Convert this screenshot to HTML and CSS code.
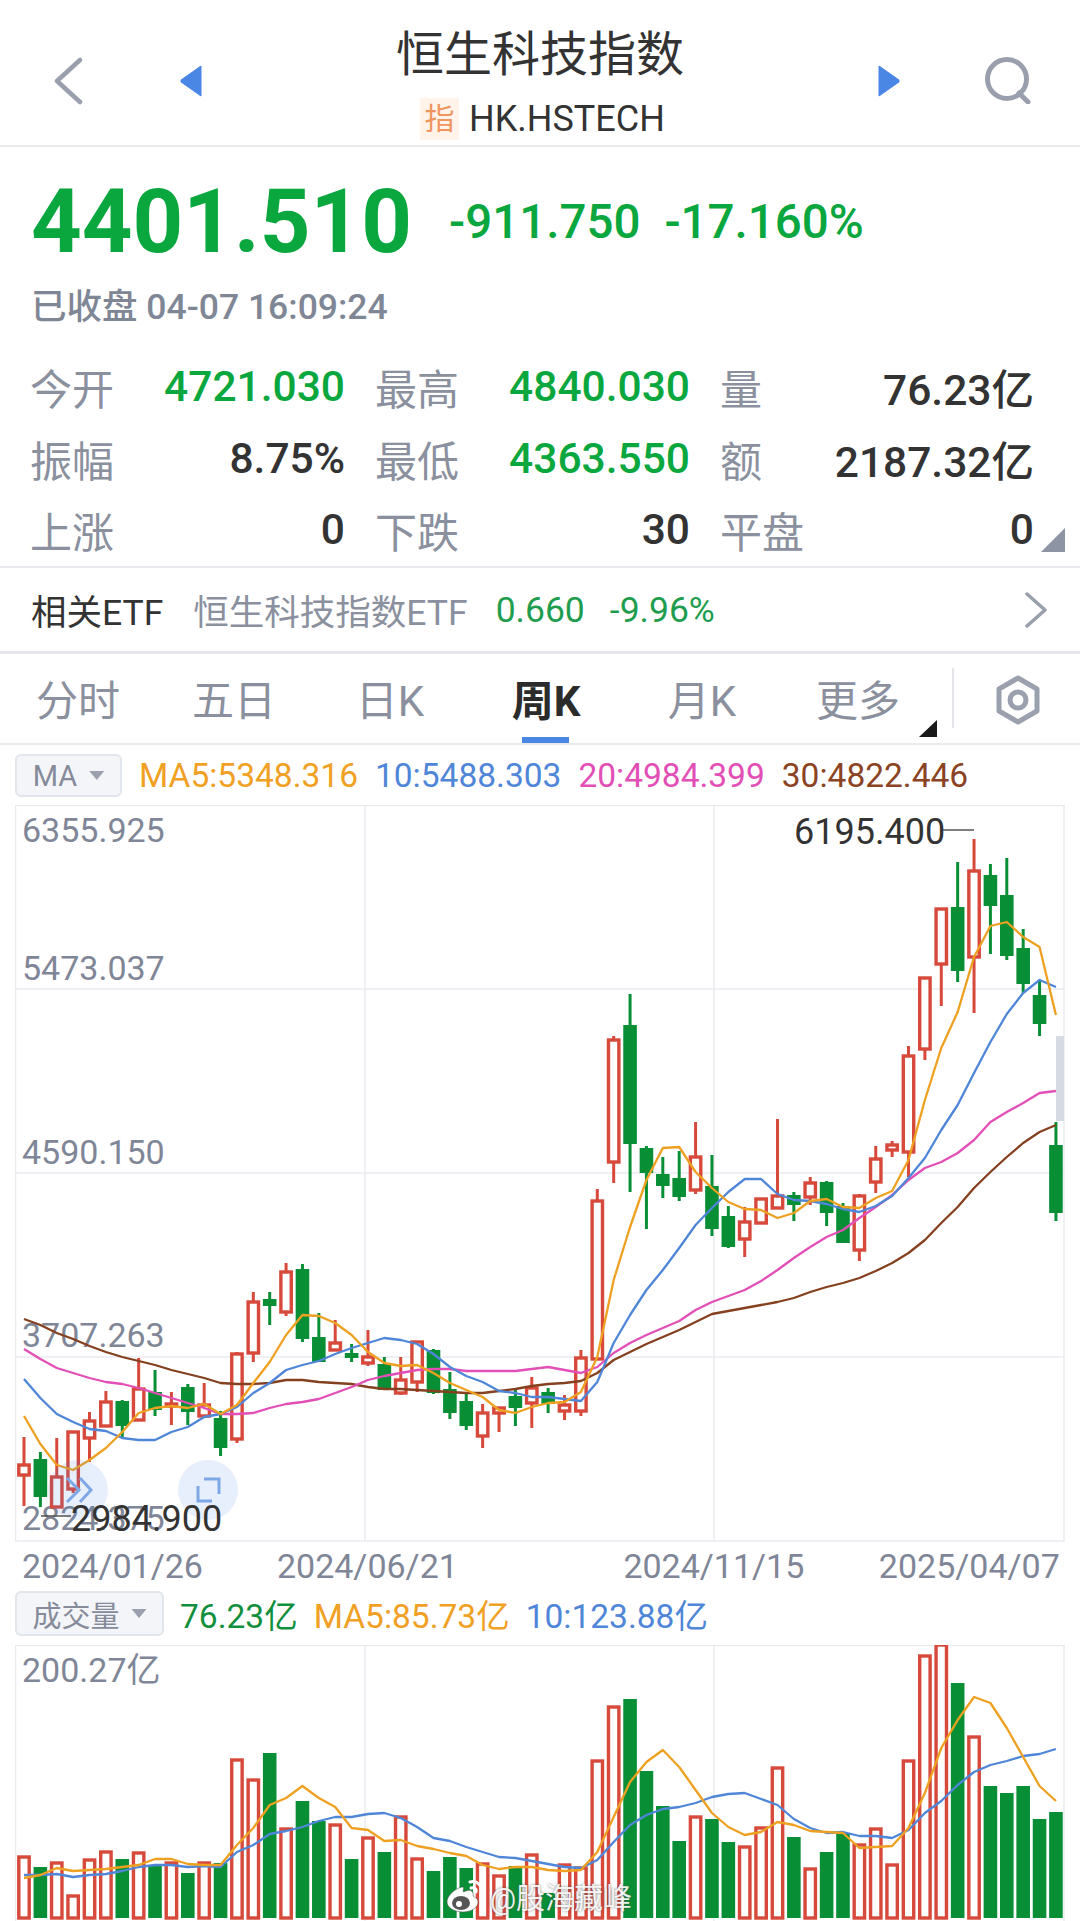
FILE: index.html
```html
<!DOCTYPE html>
<html>
<head>
    <meta charset="utf-8">
    <title>恒生科技指数</title>
    <link rel="stylesheet" href="styles.css">
</head>
<body>
    <div class="page">
        <div class="header">
            <div class="nav nav-left">
                <svg class="icon-back" width="29" height="48" viewBox="0 0 29 48"><path d="M26 3 L3 24 L26 45" /></svg>
                <svg class="icon-arrow" width="22" height="32" viewBox="0 0 22 32"><path d="M21 1 V31 L1 17 V15 Z" /></svg>
            </div>
            <div class="title-block">
                <h1>恒生科技指数</h1>
                <div class="code"><span class="code-tag">指</span>HK.HSTECH</div>
            </div>
            <div class="nav nav-right">
                <svg class="icon-arrow" width="22" height="32" viewBox="0 0 22 32"><path d="M1 1 V31 L21 17 V15 Z" /></svg>
                <svg class="icon-search" width="47" height="47" viewBox="0 0 47 47"><circle cx="23" cy="22" r="19.5" /><path d="M35 36 L44 45" /></svg>
            </div>
        </div>

        <div class="quote">
            <div class="price-row">
                <span class="price">4401.510</span>
                <span class="change">-911.750</span>
                <span class="change">-17.160%</span>
            </div>
            <div class="status">已收盘 04-07 16:09:24</div>
        </div>

        <div class="stats">
            <div class="stat"><span class="stat-name">今开</span><span class="stat-num down">4721.030</span></div>
            <div class="stat"><span class="stat-name">最高</span><span class="stat-num down">4840.030</span></div>
            <div class="stat"><span class="stat-name">量</span><span class="stat-num">76.23亿</span></div>
            <div class="stat"><span class="stat-name">振幅</span><span class="stat-num">8.75%</span></div>
            <div class="stat"><span class="stat-name">最低</span><span class="stat-num down">4363.550</span></div>
            <div class="stat"><span class="stat-name">额</span><span class="stat-num">2187.32亿</span></div>
            <div class="stat"><span class="stat-name">上涨</span><span class="stat-num">0</span></div>
            <div class="stat"><span class="stat-name">下跌</span><span class="stat-num">30</span></div>
            <div class="stat"><span class="stat-name">平盘</span><span class="stat-num">0</span></div>
            <div class="stats-corner"></div>
        </div>

        <div class="etf">
            <span class="etf-title">相关ETF</span>
            <span class="etf-name">恒生科技指数ETF</span>
            <span class="etf-price">0.660</span>
            <span class="etf-price">-9.96%</span>
            <svg class="icon-more" width="24" height="36" viewBox="0 0 24 36"><path d="M3 2 L21 18 L3 34" /></svg>
        </div>

        <div class="tabs">
            <div class="tab">分时</div>
            <div class="tab">五日</div>
            <div class="tab">日K</div>
            <div class="tab tab-on">周K</div>
            <div class="tab">月K</div>
            <div class="tab tab-more">更多</div>
            <div class="tab-split"></div>
            <svg class="icon-setting" width="46" height="50" viewBox="0 0 46 50"><path d="M23 3 L42 14 V36 L23 47 L4 36 V14 Z" /><circle cx="23" cy="25" r="8" /></svg>
        </div>

        <div class="legend legend-ma">
            <div class="picker picker-ma">MA<i></i></div>
            <span class="c-ma5">MA5:5348.316</span>
            <span class="c-ma10">10:5488.303</span>
            <span class="c-ma20">20:4984.399</span>
            <span class="c-ma30">30:4822.446</span>
        </div>

        <svg id="kline" class="chart" width="1050" height="737" viewBox="15 805 1050 737"></svg>

        <div class="dates">
            <span>2024/01/26</span>
            <span class="date-b">2024/06/21</span>
            <span class="date-c">2024/11/15</span>
            <span class="date-d">2025/04/07</span>
        </div>

        <div class="legend legend-vol">
            <div class="picker picker-vol">成交量<i></i></div>
            <span class="c-vol">76.23亿</span>
            <span class="c-ma5">MA5:85.73亿</span>
            <span class="c-ma10">10:123.88亿</span>
        </div>

        <svg id="volume" class="chart" width="1050" height="276" viewBox="15 1645 1050 276"></svg>

        <div class="watermark">
            <svg width="40" height="34" viewBox="0 0 40 34">
                <path class="wb-body" d="M16 8 C8 10 1 17 1 23 C1 29 9 33 17 33 C26 33 32 28 32 23 C32 19 28 18 27 17 C28 13 25 10 20 12 C18 13 17 13 17 12 C18 9 18 8 16 8 Z" />
                <ellipse class="wb-eye" cx="15" cy="24" rx="9" ry="7" />
                <circle class="wb-dot" cx="13" cy="25" r="3" />
                <path class="wb-wave" d="M24 3 C31 1 37 7 36 14" />
                <path class="wb-wave" d="M25 9 C28 8 31 10 30 13" />
            </svg>
            <span>@股海藏峰</span>
        </div>
    </div>

    <script src="chart.js"></script>
</body>
</html>
```

FILE: styles.css
```css
* {
    box-sizing: border-box;
}
body {
    margin: 0;
    background: #fff;
    font-family: Roboto, "Noto Sans CJK SC", sans-serif;
    color: #333;
}
.page {
    position: relative;
    width: 1080px;
    height: 1921px;
    overflow: hidden;
}

/* top bar */
.header {
    display: grid;
    grid-template-columns: 1fr auto 1fr;
    height: 147px;
    border-bottom: 2px solid #e9eaed;
}
.nav {
    display: flex;
    align-items: flex-start;
    padding-top: 57px;
}
.nav-left {
    padding-left: 54px;
    gap: 97px;
}
.nav-right {
    justify-content: flex-end;
    padding-right: 49px;
    gap: 84px;
}
.icon-back path {
    fill: none;
    stroke: #9a9fad;
    stroke-width: 4.5;
    stroke-linecap: round;
    stroke-linejoin: round;
}
.icon-arrow {
    margin-top: 8px;
}
.icon-arrow path {
    fill: #4a86e4;
    stroke: #4a86e4;
    stroke-width: 1;
    stroke-linejoin: round;
}
.icon-search circle, .icon-search path {
    fill: none;
    stroke: #9a9fad;
    stroke-width: 5;
    stroke-linecap: round;
}
.title-block {
    text-align: center;
}
.title-block h1 {
    margin: 0;
    padding-top: 25px;
    font-size: 48px;
    line-height: 60px;
    font-weight: 400;
}
.code {
    display: flex;
    align-items: center;
    justify-content: center;
    height: 42px;
    margin-top: 13px;
    padding-left: 5px;
    font-size: 36px;
    color: #333;
}
.code-tag {
    width: 39px;
    height: 42px;
    margin-right: 10px;
    background: #fff3ea;
    color: #f0955f;
    font-size: 30px;
    line-height: 42px;
}

/* price */
.quote {
    height: 204px;
    padding-left: 31px;
}
.price-row {
    display: flex;
    align-items: center;
    height: 150px;
    color: #0aa73f;
}
.price {
    font-size: 88.5px;
    font-weight: 700;
    margin-right: 37px;
}
.change {
    font-size: 47.5px;
    font-weight: 500;
    margin-right: 24px;
}
.status {
    margin-top: -12px;
    font-size: 35.5px;
    line-height: 44px;
    font-weight: 500;
    color: #7f8695;
}

/* stats table */
.stats {
    position: relative;
    display: grid;
    grid-template-columns: 315px 315px 314px;
    grid-auto-rows: 71.5px;
    column-gap: 30px;
    height: 215px;
    padding-left: 30px;
}
.stat {
    display: flex;
    align-items: center;
    justify-content: space-between;
}
.stat-name {
    font-size: 42px;
    color: #8a909e;
}
.stat-num {
    font-size: 42.5px;
    font-weight: 500;
    color: #333;
}
.down {
    color: #0aa73f;
}
.stats-corner {
    position: absolute;
    right: 15px;
    bottom: 14px;
    width: 24px;
    height: 24px;
    background: #8d94a3;
    clip-path: polygon(100% 0, 100% 100%, 0 100%);
}

/* related etf */
.etf {
    display: flex;
    align-items: center;
    height: 88px;
    padding-left: 31px;
    border-top: 2px solid #e9eaed;
    border-bottom: 3px solid #e6e7ea;
    font-size: 35.5px;
}
.etf-title {
    color: #333;
    margin-right: 30px;
}
.etf-name {
    color: #8a909e;
    margin-right: 28px;
}
.etf-price {
    color: #1f9d4f;
    margin-right: 25px;
}
.icon-more {
    margin-left: auto;
    margin-right: 32px;
}
.icon-more path {
    fill: none;
    stroke: #9a9fad;
    stroke-width: 3.5;
    stroke-linecap: round;
    stroke-linejoin: round;
}

/* period tabs */
.tabs {
    display: grid;
    grid-template-columns: repeat(6, 156px) 1fr;
    align-items: center;
    position: relative;
    height: 91px;
    border-bottom: 2px solid #e9eaed;
}
.tab {
    position: relative;
    height: 89px;
    line-height: 95px;
    text-align: center;
    font-size: 42px;
    color: #8a909e;
}
.tab-on {
    color: #2b2b2b;
    font-weight: 700;
}
.tab-on::after {
    content: "";
    position: absolute;
    left: 54px;
    bottom: 0;
    width: 47px;
    height: 6px;
    background: #4a86e4;
}
.tab-more::after {
    content: "";
    position: absolute;
    right: -1px;
    bottom: 6px;
    width: 18px;
    height: 17px;
    background: #1a1a1a;
    clip-path: polygon(100% 0, 100% 100%, 0 100%);
}
.tab-split {
    position: absolute;
    left: 952px;
    top: 14px;
    width: 2px;
    height: 60px;
    background: #e4e5e9;
}
.icon-setting {
    position: absolute;
    left: 995px;
    top: 21px;
}
.icon-setting path, .icon-setting circle {
    fill: none;
    stroke: #9aa0ae;
    stroke-width: 5;
    stroke-linejoin: round;
}

/* legends */
.legend {
    display: flex;
    align-items: center;
    padding-left: 15px;
    font-size: 33.5px;
}
.legend-ma {
    height: 60px;
    padding-top: 1px;
    gap: 17px;
}
.legend-vol {
    height: 55px;
    padding-bottom: 8px;
    gap: 16px;
}
.picker {
    display: flex;
    align-items: center;
    justify-content: center;
    background: #f4f5f9;
    border: 2px solid #e3e5ed;
    border-radius: 6px;
    color: #858b9b;
    font-size: 29px;
}
.picker i {
    width: 15px;
    height: 9px;
    margin-left: 12px;
    background: #9aa0ae;
    clip-path: polygon(0 0, 100% 0, 50% 100%);
}
.picker-ma {
    width: 107px;
    height: 43px;
}
.picker-vol {
    width: 149px;
    height: 45px;
}
.c-ma5 { color: #f0a023; }
.c-ma10 { color: #4f86d8; }
.c-ma20 { color: #e24fb6; }
.c-ma30 { color: #8b4323; }
.c-vol { color: #128f3d; }

/* charts */
.chart {
    display: block;
    margin-left: 15px;
}
.chart text {
    font-family: Roboto, "Noto Sans CJK SC", sans-serif;
    font-size: 34px;
    fill: #7f8697;
}
.chart .peak {
    font-size: 36px;
    fill: #333;
}
.dates {
    display: flex;
    align-items: center;
    height: 48px;
    padding-left: 22px;
    font-size: 34px;
    color: #7f8697;
}
.date-b { margin-left: 74px; }
.date-c { margin-left: 165.5px; }
.date-d { margin-left: 74.5px; }

/* weibo mark on top of the bars */
.watermark {
    position: absolute;
    left: 446px;
    top: 1875px;
    display: flex;
    align-items: center;
    gap: 4px;
    font-size: 29px;
    color: rgba(255, 255, 255, 0.92);
    text-shadow: 0 0 3px rgba(70, 70, 70, 0.7);
}
.wb-body {
    fill: #fff;
    stroke: rgba(70, 70, 70, 0.5);
}
.wb-eye {
    fill: #555;
}
.wb-dot {
    fill: #fff;
}
.wb-wave {
    fill: none;
    stroke: #fff;
    stroke-width: 3;
    stroke-linecap: round;
}
```

FILE: chart.js
```js
var RED = '#d6493b';
var GREEN = '#088f36';
var COLORS = { ma5: '#eea021', ma10: '#4f86d8', ma20: '#e24fb6', ma30: '#84401f' };
var NS = 'http://www.w3.org/2000/svg';

function xAt(i) {
    return 24 + i * 16.38;
}

// [wick top, wick bottom, body top, body bottom, rising]
var candles = [
    [1437,1506,1465,1475,1],[1452,1507,1459,1497,0],[1438,1507,1477,1507,1],[1431,1493,1432,1489,1],
    [1412,1462,1421,1438,1],[1391,1427,1402,1426,1],[1400,1437,1401,1426,0],[1358,1420,1389,1420,1],
    [1370,1416,1392,1410,0],[1392,1425,1404,1406,1],[1384,1425,1387,1412,0],[1383,1417,1405,1416,1],
    [1411,1456,1418,1448,0],[1352,1443,1354,1439,1],[1292,1362,1302,1353,1],[1292,1325,1299,1306,0],
    [1263,1316,1272,1312,1],[1264,1342,1269,1339,0],[1313,1362,1337,1362,0],[1320,1350,1343,1350,1],
    [1344,1362,1353,1358,0],[1330,1366,1357,1363,1],[1357,1390,1364,1390,0],[1357,1395,1380,1393,1],
    [1342,1392,1342,1382,1],[1349,1394,1350,1393,0],[1372,1419,1389,1413,0],[1394,1430,1401,1426,0],
    [1404,1448,1413,1436,1],[1407,1432,1408,1413,1],[1388,1426,1396,1408,0],[1377,1428,1388,1403,1],
    [1388,1413,1392,1404,0],[1395,1420,1405,1411,1],[1350,1416,1358,1411,1],[1189,1360,1201,1359,1],
    [1036,1183,1040,1162,1],[994,1192,1025,1144,0],[1146,1229,1148,1173,0],[1157,1198,1174,1186,0],
    [1151,1201,1178,1197,0],[1122,1194,1157,1190,1],[1155,1236,1186,1229,0],[1206,1248,1216,1247,0],
    [1207,1257,1222,1239,1],[1199,1224,1199,1223,1],[1119,1209,1196,1208,1],[1192,1221,1195,1205,0],
    [1177,1205,1183,1197,1],[1181,1226,1182,1213,0],[1203,1243,1206,1243,0],[1194,1261,1196,1250,1],
    [1146,1193,1159,1182,1],[1141,1157,1145,1150,1],[1046,1177,1056,1152,1],[978,1060,978,1049,1],
    [909,1006,909,964,1],[862,982,907,971,0],[839,1013,871,957,1],[864,954,875,906,0],
    [858,960,895,956,0],[929,993,948,984,0],[980,1036,995,1024,0],[1122,1221,1145,1213,0]
];

var ma5 = [1416,1444,1465,1470,1460,1448,1432,1413,1408,1406,1408,1404,1414,1405,1383,1362,1335,1315,1316,1323,1335,1352,1363,1366,1365,1373,1383,1390,1397,1410,1413,1407,
    1403,1402,1392,1357,1280,1227,1180,1148,1147,1172,1188,1202,1209,1210,1218,1213,1201,1199,1207,1208,1198,1191,1160,1100,1048,1012,957,926,922,937,947,1015];
var ma10 = [1379,1398,1414,1422,1429,1431,1438,1440,1440,1432,1427,1417,1414,1407,1393,1383,1370,1365,1361,1354,1348,1343,1338,1340,1344,1354,1367,1376,1382,1391,1393,1397,
    1397,1399,1401,1382,1343,1315,1290,1270,1248,1225,1208,1192,1179,1179,1194,1200,1201,1204,1209,1212,1206,1196,1178,1158,1130,1105,1073,1042,1014,993,980,987];
var ma20 = [1349,1359,1368,1373,1378,1382,1384,1388,1393,1398,1403,1408,1414,1414,1413,1408,1404,1402,1399,1393,1387,1380,1376,1373,1370,1369,1369,1371,1371,1371,1371,1369,
    1367,1370,1373,1367,1353,1343,1335,1328,1321,1310,1302,1296,1290,1281,1270,1258,1247,1237,1230,1218,1207,1195,1180,1168,1162,1153,1140,1122,1112,1103,1093,1091];
var ma30 = [1319,1325,1333,1339,1346,1352,1357,1361,1365,1370,1374,1378,1383,1384,1384,1383,1380,1380,1382,1383,1384,1387,1389,1389,1390,1391,1392,1393,1393,1391,1389,1386,
    1384,1383,1381,1373,1360,1352,1344,1337,1330,1322,1314,1311,1308,1305,1302,1298,1292,1287,1283,1278,1271,1263,1253,1240,1223,1207,1188,1172,1157,1143,1132,1125];

var bars = [
    [1857,1],[1867,0],[1863,1],[1896,1],[1860,1],[1852,1],[1859,0],[1853,1],[1866,0],[1863,1],[1873,0],[1863,1],[1863,0],
    [1760,1],[1780,1],[1753,0],[1829,1],[1801,0],[1821,0],[1825,1],[1859,0],[1838,1],[1852,0],[1817,1],[1859,1],[1871,0],
    [1857,0],[1868,0],[1864,1],[1876,1],[1866,0],[1855,1],[1893,0],[1865,1],[1868,1],[1761,1],[1707,1],[1699,0],[1771,0],
    [1806,0],[1841,0],[1817,1],[1819,0],[1842,0],[1847,1],[1828,1],[1768,1],[1837,0],[1869,1],[1852,0],[1833,0],[1845,1],
    [1829,1],[1865,1],[1761,1],[1656,1],[1645,1],[1683,0],[1737,1],[1786,0],[1793,0],[1786,0],[1819,0],[1812,0]
];
var volMa5 = [1878,1875,1868,1871,1870,1869,1867,1865,1859,1859,1864,1865,1865,1845,1828,1805,1798,1786,1798,1807,1828,1830,1841,1840,1846,1849,1853,1856,1865,1869,1867,1867,
    1870,1871,1870,1852,1817,1782,1762,1750,1767,1790,1813,1827,1835,1832,1822,1825,1831,1832,1833,1848,1847,1846,1828,1793,1748,1720,1697,1703,1728,1757,1786,1801];
var volMa10 = [1875,1875,1874,1877,1875,1874,1871,1867,1865,1865,1867,1866,1867,1852,1845,1834,1831,1827,1821,1817,1817,1814,1813,1818,1827,1838,1841,1847,1852,1857,1858,1861,
    1864,1867,1868,1860,1842,1825,1815,1809,1807,1803,1797,1794,1793,1799,1805,1819,1828,1833,1832,1836,1836,1838,1830,1813,1801,1785,1772,1765,1761,1756,1754,1749];

function add(svg, tag, attrs, text) {
    var el = document.createElementNS(NS, tag);
    for (var k in attrs) {
        el.setAttribute(k, attrs[k]);
    }
    if (text) {
        el.textContent = text;
    }
    svg.appendChild(el);
    return el;
}

function drawGrid(svg, top, bottom, rows) {
    var color = '#e9ebef';
    rows.forEach(function(y) {
        add(svg, 'line', { x1: 15, x2: 1064.5, y1: y, y2: y, stroke: color, 'stroke-width': 1.5 });
    });
    [15.5, 365, 714, 1064].forEach(function(x) {
        add(svg, 'line', { x1: x, x2: x, y1: top, y2: bottom, stroke: color, 'stroke-width': 1.5 });
    });
}

function drawLine(svg, values, color) {
    var pts = values.map(function(y, i) {
        return xAt(i) + ',' + y;
    });
    add(svg, 'polyline', {
        points: pts.join(' '),
        fill: 'none',
        stroke: color,
        'stroke-width': 2.3,
        'stroke-linejoin': 'round'
    });
}

function drawBox(svg, x, top, bottom, rising) {
    if (rising) {
        add(svg, 'rect', { x: x - 5.2, y: top, width: 10.4, height: bottom - top, fill: '#fff', stroke: RED, 'stroke-width': 3.4 });
    } else {
        add(svg, 'rect', { x: x - 6.8, y: top, width: 13.6, height: bottom - top, fill: GREEN });
    }
}

function drawKline() {
    var svg = document.getElementById('kline');
    drawGrid(svg, 805, 1541, [805.5, 989, 1173, 1357, 1541]);

    var labels = [['6355.925', 842], ['5473.037', 980], ['4590.150', 1164], ['3707.263', 1347], ['2824.375', 1530]];
    labels.forEach(function(l) {
        add(svg, 'text', { x: 22, y: l[1] }, l[0]);
    });

    candles.forEach(function(c, i) {
        var x = xAt(i);
        var color = c[4] ? RED : GREEN;
        add(svg, 'line', { x1: x, x2: x, y1: c[0], y2: c[1], stroke: color, 'stroke-width': 3 });
        drawBox(svg, x, c[2], c[3], c[4]);
    });

    drawLine(svg, ma30, COLORS.ma30);
    drawLine(svg, ma20, COLORS.ma20);
    drawLine(svg, ma10, COLORS.ma10);
    drawLine(svg, ma5, COLORS.ma5);

    // scroll thumb
    add(svg, 'rect', { x: 1056, y: 1036, width: 8, height: 85, fill: '#d5dae3' });

    // round buttons over the chart
    add(svg, 'circle', { cx: 78, cy: 1490, r: 30, fill: 'rgba(74,134,228,0.13)' });
    add(svg, 'circle', { cx: 208, cy: 1490, r: 30, fill: 'rgba(74,134,228,0.13)' });
    var btn = { fill: 'none', stroke: '#7ea7e6', 'stroke-width': 3 };
    add(svg, 'path', Object.assign({ d: 'M67 1478 L79 1490 L67 1502 M80 1478 L91 1490 L80 1502' }, btn));
    add(svg, 'path', Object.assign({ d: 'M204 1479 H219 V1494 M198 1486 V1501 H212' }, btn));

    // highest and lowest marks
    add(svg, 'text', { x: 794, y: 844, 'class': 'peak' }, '6195.400');
    add(svg, 'line', { x1: 943, x2: 974, y1: 830, y2: 830, stroke: '#555', 'stroke-width': 1.5 });
    add(svg, 'line', { x1: 41, x2: 71, y1: 1516, y2: 1516, stroke: '#555', 'stroke-width': 1.5 });
    add(svg, 'text', { x: 71, y: 1531, 'class': 'peak' }, '2984.900');
}

function drawVolume() {
    var svg = document.getElementById('volume');
    drawGrid(svg, 1645, 1921, [1645.5]);
    add(svg, 'text', { x: 22, y: 1682 }, '200.27亿');

    bars.forEach(function(b, i) {
        drawBox(svg, xAt(i), b[0], 1918, b[1]);
    });

    drawLine(svg, volMa10, COLORS.ma10);
    drawLine(svg, volMa5, COLORS.ma5);
}

drawKline();
drawVolume();
```
